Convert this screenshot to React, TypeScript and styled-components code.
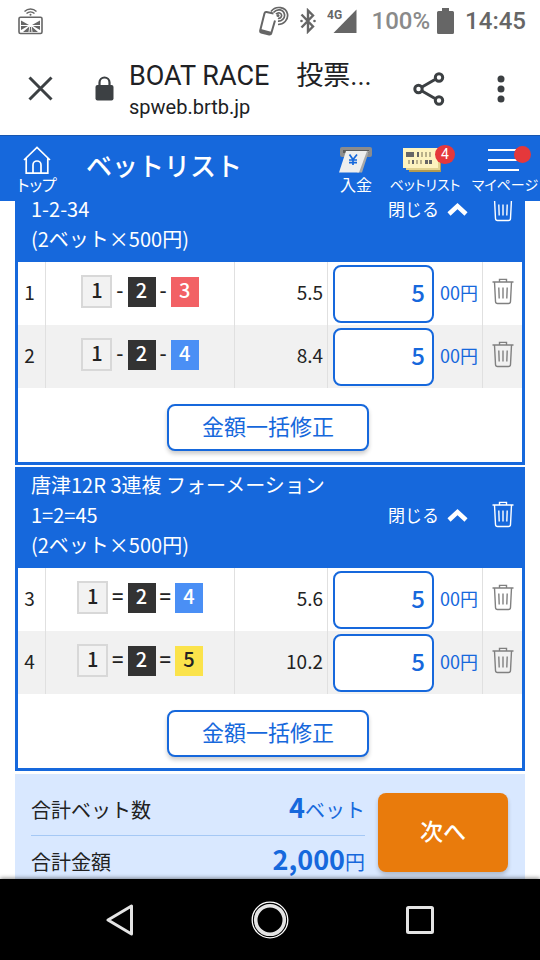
import React, { useState } from "react";
import styled, { createGlobalStyle } from "styled-components";

const BLUE = "#1668dc";
const JP = `"Noto Sans CJK JP", sans-serif`;
const ROBOTO = `Roboto, "Noto Sans CJK JP", sans-serif`;

const GlobalStyle = createGlobalStyle`
  * { box-sizing: border-box; }
  body { margin: 0; background: #fff; color: #222; font-family: ${JP}; }
  button, input { font: inherit; color: inherit; }
  button { padding: 0; border: 0; background: none; cursor: pointer; }
  svg { display: block; flex: none; }
`;

const Screen = styled.div`
  display: flex;
  flex-direction: column;
  height: 100vh;
  overflow: hidden;
`;

/* ---------- system status bar ---------- */

const StatusBar = styled.div`
  display: flex;
  align-items: center;
  flex: none;
  height: 42px;
  padding: 0 14px 0 18px;
  font: 500 24px/28px ${ROBOTO};
  color: #666;
`;
const StatusSpacer = styled.div`
  flex: 1;
`;
const StatusIcons = styled.div`
  display: flex;
  align-items: center;
  gap: 11px;
`;
const Percent = styled.span`
  margin-left: 4px;
  margin-right: -4px;
  color: #8a8a8a;
`;

/* ---------- browser tab bar ---------- */

const BrowserBar = styled.div`
  display: flex;
  align-items: center;
  flex: none;
  height: 93px;
  padding: 0 35px 0 28px;
  color: #3c4043;
`;
const BarButton = styled.button`
  display: grid;
  place-items: center;
`;
const LockSlot = styled.div`
  margin: 0 15px 0 42px;
`;
const Address = styled.div`
  flex: 1;
  min-width: 0;
  padding-top: 2px;
  font-family: ${ROBOTO};
  color: #202124;
  white-space: nowrap;
`;
const PageTitle = styled.div`
  font-size: 27px;
  line-height: 34px;
`;
const Host = styled.div`
  font-size: 20px;
  line-height: 28px;
`;
const BarActions = styled.div`
  display: flex;
  align-items: center;
  gap: 52px;
`;

/* ---------- site header ---------- */

const SiteHeader = styled.header`
  display: flex;
  align-items: stretch;
  gap: 6px;
  flex: none;
  height: 66px;
  border-top: 1px solid #1756b0;
  background: ${BLUE};
  color: #fff;
`;
const HeaderLink = styled.a<{ $width: number; $small?: boolean }>`
  display: flex;
  flex-direction: column;
  align-items: center;
  flex: none;
  width: ${(p) => p.$width}px;
  padding-top: 9px;
  color: inherit;
  text-decoration: none;
  font-size: ${(p) => (p.$small ? 14 : 16)}px;
  line-height: 18px;
  white-space: nowrap;
  font-feature-settings: "palt";
`;
const HeaderIcon = styled.span`
  position: relative;
  display: grid;
  place-items: center;
  height: 30px;
`;
const Badge = styled.span<{ $small?: boolean }>`
  position: absolute;
  top: ${(p) => (p.$small ? 1 : 0)}px;
  right: -8px;
  width: ${(p) => (p.$small ? 17 : 20)}px;
  height: ${(p) => (p.$small ? 17 : 19)}px;
  border-radius: 10px;
  background: #e5383b;
  font: 14px/18px ${ROBOTO};
  text-align: center;
`;
const HeaderTitle = styled.h1`
  flex: 1;
  margin: 0;
  padding-left: 6px;
  font-size: 26px;
  font-weight: 500;
  line-height: 58px;
  white-space: nowrap;
`;

/* ---------- bet list ---------- */

const Content = styled.main`
  flex: 1;
  min-height: 0;
  overflow: hidden;
  padding: 0 15px;
`;
const Cards = styled.div`
  display: flex;
  flex-direction: column;
  gap: 2px;
  margin-top: -40px;
`;
const Card = styled.section`
  border: solid ${BLUE};
  border-width: 0 3px 3px;
`;
const CardHead = styled.div`
  display: flex;
  align-items: center;
  height: 101px;
  padding: 0 8px 6px 13px;
  background: ${BLUE};
  color: #fff;
`;
const CardTitle = styled.h2`
  display: flex;
  flex-direction: column;
  justify-content: flex-end;
  align-self: stretch;
  flex: 1;
  margin: 0;
  padding-bottom: 2px;
  font-size: 20px;
  font-weight: 400;
  line-height: 30px;
  white-space: nowrap;
`;
const CloseButton = styled.button`
  display: flex;
  align-items: center;
  gap: 8px;
  margin-left: -60px;
  margin-right: 24px;
  font-size: 17px;
`;
const BetTable = styled.table`
  width: 100%;
  table-layout: fixed;
  border-collapse: separate;
  border-spacing: 0;
  font-size: 19px;
`;
const BetRow = styled.tr`
  &:nth-child(even) { background: #f1f1f1; }
`;
const Cell = styled.td<{ $width?: number; $align?: string }>`
  width: ${(p) => (p.$width ? `${p.$width}px` : "auto")};
  height: 63px;
  padding: 0 4px 4px;
  border-right: 1px solid #e0e0e0;
  text-align: ${(p) => p.$align ?? "center"};
  vertical-align: middle;
  line-height: 30px;
  &:first-child { padding: 0 4px 4px 0; }
  &:last-child { padding: 0 0 4px; border-right: 0; }
`;
const AmountCell = styled(Cell)`
  padding: 0 0 0 5px;
`;
const Combo = styled.div`
  display: flex;
  align-items: center;
  justify-content: center;
  gap: 4px;
  font-size: 20px;
  font-weight: 500;
`;
const boatStyles: Record<number, string> = {
  1: "background: #f2f2f2; border: 2px solid #d8d8d8; width: 31px; height: 33px; line-height: 26px;",
  2: "background: #333; color: #fff;",
  3: "background: #f26165; color: #fff;",
  4: "background: #4a8ff5; color: #fff;",
  5: "background: #fbe34b;",
};
const Boat = styled.span<{ $n: number }>`
  width: 28px;
  height: 30px;
  line-height: 26px;
  text-align: center;
  ${(p) => boatStyles[p.$n]}
`;
const Mark = styled.span`
  line-height: 26px;
  padding-bottom: 4px;
`;
const Amount = styled.label`
  display: flex;
  align-items: center;
  gap: 6px;
  color: ${BLUE};
  white-space: nowrap;
`;
const AmountUnit = styled.span`
  padding-bottom: 4px;
  font-size: 18px;
`;
const AmountInput = styled.input`
  width: 101px;
  height: 58px;
  padding: 0 7px 5px 0;
  border: 2px solid ${BLUE};
  border-radius: 8px;
  background: #fff;
  color: ${BLUE};
  font-size: 24px;
  font-weight: 500;
  text-align: right;
`;
const RowDelete = styled.button`
  display: grid;
  place-items: center;
  width: 100%;
  color: #808080;
`;
const CardFoot = styled.div`
  display: flex;
  justify-content: center;
  height: 74px;
  padding: 16px 0 11px;
`;
const BulkButton = styled.button`
  width: 202px;
  height: 47px;
  margin-right: 4px;
  padding-bottom: 6px;
  border: 2px solid ${BLUE};
  border-radius: 8px;
  background: #fff;
  box-shadow: 0 3px 4px rgba(0, 0, 0, 0.2);
  color: ${BLUE};
  font-size: 22px;
  line-height: 32px;
`;

/* ---------- totals ---------- */

const Summary = styled.section`
  display: flex;
  gap: 13px;
  margin-top: 3px;
  padding: 19px 17px 19px 16px;
  background: #d9e8ff;
`;
const Totals = styled.dl`
  flex: 1;
  margin: 0;
`;
const TotalLine = styled.div`
  display: flex;
  align-items: baseline;
  justify-content: space-between;
  height: 42px;
  font-size: 20px;
  line-height: 28px;
  & + & {
    height: 50px;
    padding-top: 9px;
    border-top: 1px solid #a5c8f5;
  }
`;
const TotalValue = styled.dd`
  margin: 0;
  color: ${BLUE};
`;
const Figure = styled.strong`
  font-size: 27px;
  font-weight: 700;
`;
const NextButton = styled.button`
  width: 130px;
  height: 79px;
  padding-bottom: 5px;
  border-radius: 8px;
  background: #e97b0c;
  box-shadow: 0 3px 4px rgba(0, 0, 0, 0.2);
  color: #fff;
  font-size: 23px;
  font-weight: 500;
`;

/* ---------- system navigation ---------- */

const NavBar = styled.nav`
  position: relative;
  display: flex;
  justify-content: center;
  flex: none;
  height: 81px;
  background: #000;
  box-shadow: 0 -1px 4px rgba(0, 0, 0, 0.45);
`;
const NavButton = styled.button`
  display: grid;
  place-items: center;
  width: 150px;
`;

/* ---------- icons ---------- */

const TrashIcon = () => (
  <svg width="22" height="27" viewBox="0 0 22 27" fill="none" stroke="currentColor" strokeWidth="1.4">
    <path d="M7.5 3.5V1.4h7v2.1M0.5 4h21M2.5 4l1 19.5c.1 1.5.8 2 2 2h11c1.2 0 1.900-.5 2-2L19.500 4" />
    <path d="M6.800 9.500l.4 11M11 9.500v11M15.200 9.500l-.4 11" />
  </svg>
);

const CastIcon = () => (
  <svg width="25" height="27" viewBox="0 0 25 27" fill="none" stroke="#666">
    <path d="M6.500 3.500c3.500-3.300 8.500-3.300 12 0M8.500 5.600c2.300-2.200 5.700-2.200 8 0" strokeWidth="1.400" />
    <circle cx="12.500" cy="6.800" r="1" fill="#666" stroke="none" />
    <rect x="1" y="9.200" width="23" height="16.300" rx="1.500" strokeWidth="1.600" />
    <path d="M3 12.500l8 4.500H3zM22 12.500l-8 4.500h8zM3 18h7l-7 4zM22 18h-7l7 4zM11.300 18.500L5 24h5.500zM13.700 18.500L20 24h-5.500zM12 19h1l.5 5h-2z" fill="#666" stroke="none" />
  </svg>
);

const PhoneNfcIcon = () => (
  <svg width="30" height="30" viewBox="0 0 30 30" fill="none" stroke="#666">
    <path d="M14.500 7.500L7.500 6q-1.500-.3-2 1.200L1.200 24.500q-.3 1.600 1 2l8 2q1.500.3 2-1L16 14.500" strokeWidth="2" />
    <path d="M1.500 24.500l11 3" strokeWidth="3" />
    <path d="M12 5.500C17-1 27 1 28.500 8c1 6-4 10.500-9.500 10.500M14.500 6.500c4-4.500 10-3 11 2 .6 4-3 7-6.500 6.700M17 8.200c2.500-2.500 5.500-1 5.600 1.200.1 2-1.800 3.400-3.600 2.800" strokeWidth="1.700" />
    <circle cx="19" cy="9.500" r="1.500" fill="#666" stroke="none" />
  </svg>
);

const BluetoothIcon = () => (
  <svg width="16" height="26" viewBox="0 0 16 26" fill="none" stroke="#666" strokeWidth="2.400">
    <path d="M1.500 6.500L13 18.500 8 23.500V2.500l5 5L1.500 19.500" />
    <circle cx="1.500" cy="13" r="1.300" fill="#666" stroke="none" />
    <circle cx="14.500" cy="13" r="1.300" fill="#666" stroke="none" />
  </svg>
);

const SignalIcon = () => (
  <svg width="30" height="26" viewBox="0 0 30 26" fill="#666">
    <path d="M29.500 1.500V25H6.500z" />
    <text x="0" y="11" fontFamily="Roboto" fontWeight="700" fontSize="12">4G</text>
  </svg>
);

const BatteryIcon = () => (
  <svg width="17" height="26" viewBox="0 0 17 26" fill="#666">
    <path d="M5 0h7v3h3.500Q17 3 17 4.500v20Q17 26 15.500 26h-14Q0 26 0 24.500v-20Q0 3 1.500 3H5z" />
  </svg>
);

const CrossIcon = () => (
  <svg width="25" height="25" viewBox="0 0 25 25" stroke="currentColor" strokeWidth="3">
    <path d="M1.500 1.500l22 22M23.500 1.500l-22 22" />
  </svg>
);

const LockIcon = () => (
  <svg width="19" height="25" viewBox="0 0 19 25">
    <path d="M4.500 10V6.500a5 5 0 0 1 10 0V10" fill="none" stroke="#3c4043" strokeWidth="2.200" />
    <rect x="0.500" y="9" width="18" height="15.500" rx="2" fill="#3c4043" />
  </svg>
);

const ShareIcon = () => (
  <svg width="32" height="34" viewBox="0 0 32 34" fill="none" stroke="currentColor" strokeWidth="3">
    <path d="M9 15l13-7.500M9 19l13 7.500" />
    <circle cx="5.500" cy="17" r="3.700" />
    <circle cx="26" cy="5.500" r="3.700" />
    <circle cx="26" cy="28.500" r="3.700" />
  </svg>
);

const MoreIcon = () => (
  <svg width="8" height="28" viewBox="0 0 8 28" fill="currentColor">
    <circle cx="4" cy="4" r="3.500" />
    <circle cx="4" cy="14" r="3.500" />
    <circle cx="4" cy="24" r="3.500" />
  </svg>
);

const HomeIcon = () => (
  <svg width="28" height="28" viewBox="0 0 28 28" fill="none" stroke="#fff" strokeWidth="1.700">
    <path d="M1 14L14 1.500 27 14M3.200 12v15.200h21.600V12M10 27v-8a4 4 0 0 1 8 0v8" />
  </svg>
);

const DepositIcon = () => (
  <svg width="34" height="28" viewBox="0 0 34 28">
    <rect x="1" y="1" width="32" height="10" rx="2" fill="#8c8c8c" />
    <rect x="4" y="4" width="26" height="3" fill="#5b5b5b" />
    <path d="M24 5h6l-7 21.500h-5z" fill="#a8a8a8" />
    <path d="M7 5h21l-8 21.500H0z" fill="#eee" />
    <path d="M10.500 8.500l3.500 5 4-5M14 13.500V19M10 14h8M10 16.600h8" stroke={BLUE} strokeWidth="1.700" fill="none" />
  </svg>
);

const TicketsIcon = () => (
  <svg width="44" height="26" viewBox="0 0 44 26">
    <rect x="6" y="6" width="32" height="19" fill="#b39a50" />
    <rect x="3" y="3" width="34" height="20" fill="#e2d391" />
    <rect x="0" y="1" width="35" height="20" fill="#fdf3bf" />
    <g fill="#666">
      <rect x="3" y="5" width="8" height="5" />
      <rect x="14" y="5" width="2" height="5" />
      <rect x="22" y="13" width="3" height="4" />
      <rect x="26" y="13" width="3" height="4" />
      <rect x="9" y="13" width="2" height="4" />
    </g>
    <g fill="#b9b08a">
      <rect x="18" y="5" width="2" height="5" />
      <rect x="22" y="5" width="2" height="5" />
      <rect x="26" y="5" width="2" height="5" />
      <rect x="5" y="13" width="2" height="4" />
      <rect x="13" y="13" width="2" height="4" />
      <rect x="17" y="13" width="2" height="4" />
    </g>
  </svg>
);

const MenuIcon = () => (
  <svg width="35" height="24" viewBox="0 0 35 24" stroke="#fff" strokeWidth="2">
    <path d="M0 2h31M0 12h31M0 22h31" />
  </svg>
);

const ChevronUp = () => (
  <svg width="21" height="14" viewBox="0 0 21 14" fill="none" stroke="currentColor" strokeWidth="4.500">
    <path d="M2 12l8.500-8 8.500 8" />
  </svg>
);

/* ---------- page ---------- */

type Bet = { no: number; boats: number[]; odds: string };
type Group = { lines: string[]; mark: string; bets: Bet[] };

const groups: Group[] = [
  {
    lines: ["1-2-34", "(2ベット×500円)"],
    mark: "-",
    bets: [
      { no: 1, boats: [1, 2, 3], odds: "5.5" },
      { no: 2, boats: [1, 2, 4], odds: "8.4" },
    ],
  },
  {
    lines: ["唐津12R 3連複 フォーメーション", "1=2=45", "(2ベット×500円)"],
    mark: "=",
    bets: [
      { no: 3, boats: [1, 2, 4], odds: "5.6" },
      { no: 4, boats: [1, 2, 5], odds: "10.2" },
    ],
  },
];

function BetLine({ bet, mark }: { bet: Bet; mark: string }) {
  const [units, setUnits] = useState("5");
  return (
    <BetRow>
      <Cell $width={28}>{bet.no}</Cell>
      <Cell>
        <Combo>
          {bet.boats.map((n, i) => (
            <React.Fragment key={n}>
              {i > 0 && <Mark>{mark}</Mark>}
              <Boat $n={n}>{n}</Boat>
            </React.Fragment>
          ))}
        </Combo>
      </Cell>
      <Cell $width={93} $align="right">{bet.odds}</Cell>
      <AmountCell $width={155}>
        <Amount>
          <AmountInput value={units} inputMode="numeric" onChange={(e) => setUnits(e.target.value)} />
          <AmountUnit>00円</AmountUnit>
        </Amount>
      </AmountCell>
      <Cell $width={39}>
        <RowDelete aria-label="削除"><TrashIcon /></RowDelete>
      </Cell>
    </BetRow>
  );
}

function BetCard({ group }: { group: Group }) {
  return (
    <Card>
      <CardHead>
        <CardTitle>
          {group.lines.map((line) => <span key={line}>{line}</span>)}
        </CardTitle>
        <CloseButton>閉じる<ChevronUp /></CloseButton>
        <BarButton aria-label="まとめて削除"><TrashIcon /></BarButton>
      </CardHead>
      <BetTable>
        <tbody>
          {group.bets.map((bet) => <BetLine key={bet.no} bet={bet} mark={group.mark} />)}
        </tbody>
      </BetTable>
      <CardFoot>
        <BulkButton>金額一括修正</BulkButton>
      </CardFoot>
    </Card>
  );
}

export default function App() {
  return (
    <Screen>
      <GlobalStyle />
      <StatusBar>
        <CastIcon />
        <StatusSpacer />
        <StatusIcons>
          <PhoneNfcIcon />
          <BluetoothIcon />
          <SignalIcon />
          <Percent>100%</Percent>
          <BatteryIcon />
          <span>14:45</span>
        </StatusIcons>
      </StatusBar>
      <BrowserBar>
        <BarButton aria-label="閉じる"><CrossIcon /></BarButton>
        <LockSlot><LockIcon /></LockSlot>
        <Address>
          <PageTitle>BOAT RACE　投票...</PageTitle>
          <Host>spweb.brtb.jp</Host>
        </Address>
        <BarActions>
          <BarButton aria-label="共有"><ShareIcon /></BarButton>
          <BarButton aria-label="その他"><MoreIcon /></BarButton>
        </BarActions>
      </BrowserBar>
      <SiteHeader>
        <HeaderLink href="#top" $width={74}>
          <HeaderIcon><HomeIcon /></HeaderIcon>
          トップ
        </HeaderLink>
        <HeaderTitle>ベットリスト</HeaderTitle>
        <HeaderLink href="#deposit" $width={48}>
          <HeaderIcon><DepositIcon /></HeaderIcon>
          入金
        </HeaderLink>
        <HeaderLink href="#bets" $width={78} $small>
          <HeaderIcon><TicketsIcon /><Badge>4</Badge></HeaderIcon>
          ベットリスト
        </HeaderLink>
        <HeaderLink href="#mypage" $width={70} $small>
          <HeaderIcon><MenuIcon /><Badge $small /></HeaderIcon>
          マイページ
        </HeaderLink>
      </SiteHeader>
      <Content>
        <Cards>
          {groups.map((group) => <BetCard key={group.mark} group={group} />)}
        </Cards>
        <Summary>
          <Totals>
            <TotalLine>
              <dt>合計ベット数</dt>
              <TotalValue><Figure>4</Figure>ベット</TotalValue>
            </TotalLine>
            <TotalLine>
              <dt>合計金額</dt>
              <TotalValue><Figure>2,000</Figure>円</TotalValue>
            </TotalLine>
          </Totals>
          <NextButton>次へ</NextButton>
        </Summary>
      </Content>
      <NavBar>
        <NavButton aria-label="戻る">
          <svg width="28" height="32" viewBox="0 0 28 32" fill="none" stroke="#e4e4e4" strokeWidth="3" strokeLinejoin="round">
            <path d="M25.500 2v28L2 16z" />
          </svg>
        </NavButton>
        <NavButton aria-label="ホーム">
          <svg width="38" height="38" viewBox="0 0 38 38" fill="none">
            <circle cx="19" cy="19" r="17.800" stroke="#fff" strokeWidth="1.300" />
            <circle cx="19" cy="19" r="14.300" stroke="#e4e4e4" strokeWidth="3.600" />
          </svg>
        </NavButton>
        <NavButton aria-label="履歴">
          <svg width="28" height="28" viewBox="0 0 28 28" fill="none" stroke="#e4e4e4" strokeWidth="3">
            <rect x="1.500" y="1.500" width="25" height="25" rx="1" />
          </svg>
        </NavButton>
      </NavBar>
    </Screen>
  );
}
